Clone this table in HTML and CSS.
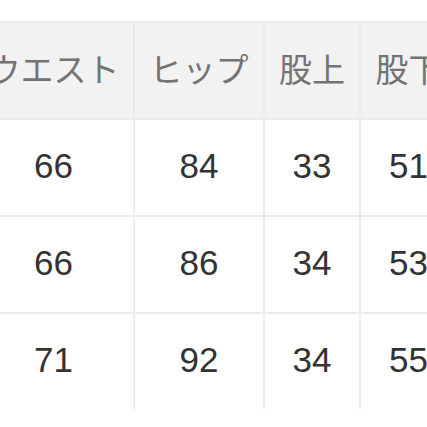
FILE: index.html
```html
<!DOCTYPE html>
<html lang="ja">
<head>
<meta charset="utf-8">
<link rel="stylesheet" href="styles.css">
</head>
<body>
<table class="size-table">
  <colgroup>
    <col class="c1"><col class="c2"><col class="c3"><col class="c4">
  </colgroup>
  <thead>
    <tr><th>ウエスト</th><th>ヒップ</th><th>股上</th><th>股下</th></tr>
  </thead>
  <tbody>
    <tr><td>66</td><td>84</td><td>33</td><td>51</td></tr>
    <tr><td>66</td><td>86</td><td>34</td><td>53</td></tr>
    <tr class="last"><td>71</td><td>92</td><td>34</td><td>55</td></tr>
  </tbody>
</table>
</body>
</html>
```
FILE: styles.css
```css
html, body {
  margin: 0;
  padding: 0;
  background: #ffffff;
  overflow: hidden;
}
.size-table {
  margin: 21px 0 0 -28px;
  border-collapse: collapse;
  table-layout: fixed;
  width: 484px;
}
.c1 { width: 161px; }
.c2 { width: 130px; }
.c3 { width: 96px; }
.c4 { width: 97px; }
.size-table th,
.size-table td {
  border: 2px solid #ececec;
  text-align: center;
  vertical-align: middle;
  padding: 0;
}
.size-table th {
  height: 89px;
  padding-bottom: 6px;
  background: #f2f2f2;
  color: #737373;
  font-family: "Noto Sans CJK JP", sans-serif;
  font-weight: 400;
  font-size: 33px;
  white-space: nowrap;
}
.size-table td {
  height: 91px;
  padding-bottom: 4px;
  color: #333333;
  font-family: "Liberation Sans", "Noto Sans CJK JP", sans-serif;
  font-size: 35px;
}
.size-table tr.last td {
  border-bottom: none;
}
```
